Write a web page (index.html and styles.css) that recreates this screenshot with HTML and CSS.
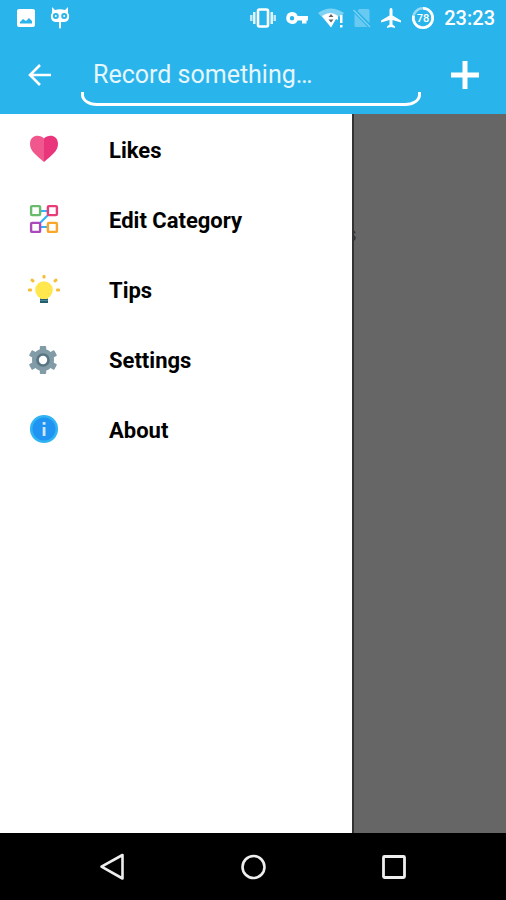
FILE: index.html
```html
<!DOCTYPE html>
<html lang="en">
<head>
  <meta charset="UTF-8" />
  <meta name="viewport" content="width=device-width, initial-scale=1.0"/>
  <title>Record something</title>
  <link rel="stylesheet" href="styles.css">
</head>
<body>
  <div class="status-bar">
    <svg width="18" height="18" viewBox="0 0 18 18">
      <path fill="#fff" fill-rule="evenodd" d="M2 0h14a2 2 0 0 1 2 2v14a2 2 0 0 1-2 2H2a2 2 0 0 1-2-2V2a2 2 0 0 1 2-2zM3 14.500h12V12l-3-3-3 3-3-2-3 3z"/>
    </svg>
    <svg class="cat" width="20" height="22" viewBox="0 0 20 22">
      <path fill="#fff" d="M2 0l3 3q5-1.500 10 0l3-3v6q2 2 1 5-1 4-5 4h-3v5.500a1 1 0 0 1-2 0V15H6q-4 0-5-4Q0 8 2 6z"/>
      <circle cx="5.800" cy="9" r="3" fill="#29b4eb"/>
      <circle cx="14.200" cy="9" r="3" fill="#29b4eb"/>
      <circle cx="5.800" cy="9" r="1" fill="#fff"/>
      <circle cx="14.200" cy="9" r="1" fill="#fff"/>
    </svg>

    <div class="status-right">
      <!-- vibrate -->
      <svg width="26" height="20" viewBox="0 0 26 20">
        <path fill="#fff" d="M0 7h2.500v6H0zM23.500 7H26v6h-2.500z" opacity=".7"/>
        <path fill="#fff" d="M3 4h2.500v12H3zM20.500 4H23v12h-2.500z" opacity=".85"/>
        <rect x="8" y="1.500" width="10" height="17" rx="1.500" fill="none" stroke="#fff" stroke-width="2.600"/>
      </svg>
      <!-- vpn key -->
      <svg width="24" height="14" viewBox="0 0 24 14">
        <path fill="#fff" fill-rule="evenodd" d="M7 1a6 6 0 0 1 5.700 4H23v4.500h-1.500V12.500H17V9.500h-4.300A6 6 0 1 1 7 1zM7 5a2.200 2.200 0 1 0 0 4.400A2.200 2.200 0 0 0 7 5z"/>
      </svg>
      <!-- wifi -->
      <svg width="26" height="20" viewBox="0 0 26 20">
        <path fill="#fff" opacity=".4" d="M0 5Q12.500-4 26 5l-3 3.500h-5L13 19z"/>
        <path fill="#fff" d="M4 8q8.500-6 16 0v4l-2-1-5 8.500z"/>
        <path fill="#6a6262" d="M10.500 9L13 6l2.500 3zM10.500 11.500h5L13 14.500z"/>
        <path fill="#fff" d="M22 7h2.500v8H22zM22 17h2.500v2.500H22z"/>
      </svg>
      <!-- no sim -->
      <svg width="18" height="20" viewBox="0 0 18 20">
        <path fill="#fff" opacity=".3" d="M6 1h9a1.500 1.500 0 0 1 1.500 1.500V15L4.500 3zM1.500 5.500L14.500 19H3a1.500 1.500 0 0 1-1.500-1.500z"/>
        <path stroke="#fff" opacity=".4" stroke-width="1.300" d="M.5 2L17 19"/>
      </svg>
      <!-- airplane -->
      <svg width="22" height="22" viewBox="0 0 22 22">
        <path fill="#fff" d="M11 1q1.500 0 1.500 2v5.500l8.500 5v2L12.500 13v4.500l2.500 2v1.500l-4-1-4 1v-1.500l2.500-2V13L1 15.500v-2l8.500-5V3Q9.500 1 11 1z"/>
      </svg>
      <!-- battery -->
      <svg width="24" height="24" viewBox="0 0 24 24">
        <circle cx="12" cy="12" r="9.700" fill="none" stroke="#fff" stroke-width="2.600" opacity=".5"/>
        <path fill="none" stroke="#fff" stroke-width="2.600" d="M12 2.300a9.700 9.700 0 1 1-9.500 7.500"/>
        <text class="battery-text" x="12" y="16" text-anchor="middle">78</text>
      </svg>
      <span class="clock">23:23</span>
    </div>
  </div>

  <header class="toolbar">
    <button class="icon-btn" aria-label="Back">
      <svg width="24" height="24" viewBox="0 0 24 24">
        <path fill="none" stroke="#fff" stroke-width="2.600" d="M13 2L3 12l10 10M3 12h21"/>
      </svg>
    </button>
    <div class="record-field">
      <input type="text" class="record-input" placeholder="Record something…" aria-label="Record something">
    </div>
    <button class="icon-btn add-btn" aria-label="Add">
      <svg width="28" height="28" viewBox="0 0 28 28">
        <path stroke="#fff" stroke-width="5" d="M14 0v28M0 14h28"/>
      </svg>
    </button>
  </header>

  <main class="content">
    <nav class="drawer">
      <a class="menu-item" href="#likes">
        <svg width="32" height="32" viewBox="0 0 32 32">
          <path fill="#f0588d" d="M16 4.500C12 0 2 .5 2 10c0 7 6 11 14 18z"/>
          <path fill="#e9357b" d="M16 4.500C20 0 30 .5 30 10c0 7-6 11-14 18z"/>
        </svg>
        <span>Likes</span>
      </a>
      <a class="menu-item" href="#category">
        <svg width="32" height="32" viewBox="0 0 32 32">
          <path fill="none" stroke="#36b3f3" stroke-width="2.200" d="M12 7h8M20 11l-9 9M12 23h8"/>
          <g fill="#fff" stroke-width="2.400">
            <rect x="3.100" y="2.100" width="9" height="9" rx="1" stroke="#67bb6b"/>
            <rect x="19.900" y="2.100" width="9" height="9" rx="1" stroke="#e83c79"/>
            <rect x="3.100" y="18.900" width="9" height="9" rx="1" stroke="#aa48bd"/>
            <rect x="19.900" y="18.900" width="9" height="9" rx="1" stroke="#fba629"/>
          </g>
        </svg>
        <span>Edit Category</span>
      </a>
      <a class="menu-item" href="#tips">
        <svg width="32" height="32" viewBox="0 0 32 32">
          <path fill="#255d70" d="M12 24h8v5h-8z"/>
          <path stroke="#4b8795" d="M12 26.500h8"/>
          <circle cx="16" cy="16" r="8.800" fill="#ffe74d"/>
          <path fill="#ffe74d" d="M11 21h10l-1.500 4h-7z"/>
          <g fill="#f7bc36">
            <rect x="14.500" y="1" width="3" height="3.500" rx="1"/>
            <rect x="2.500" y="5" width="4" height="3" rx="1" transform="rotate(40 4.500 6.500)"/>
            <rect x="25.500" y="5" width="4" height="3" rx="1" transform="rotate(-40 27.500 6.500)"/>
            <rect x="0" y="14.500" width="4" height="3" rx="1"/>
            <rect x="28" y="14.500" width="4" height="3" rx="1"/>
          </g>
        </svg>
        <span>Tips</span>
      </a>
      <a class="menu-item" href="#settings">
        <svg width="32" height="32" viewBox="0 0 32 32">
          <g fill="#819ba7">
            <circle cx="15" cy="16" r="11"/>
            <rect x="11.800" y="2" width="6.400" height="28" rx="1"/>
            <rect x="11.800" y="1.500" width="6.400" height="29" rx="1" transform="rotate(60 15 16)"/>
            <rect x="11.800" y="1.500" width="6.400" height="29" rx="1" transform="rotate(-60 15 16)"/>
          </g>
          <circle cx="15" cy="16" r="5.500" fill="#fff" stroke="#587582" stroke-width="2.600"/>
        </svg>
        <span>Settings</span>
      </a>
      <a class="menu-item" href="#about">
        <svg width="32" height="32" viewBox="0 0 32 32">
          <circle cx="16" cy="15" r="12.800" fill="#2094f3" stroke="#31b4f2" stroke-width="2.500"/>
          <path fill="#cfe6fb" d="M14.700 8h2.800v2.800h-2.800zM14.700 13h2.800v9h-2.800z"/>
        </svg>
        <span>About</span>
      </a>
    </nav>
    <div class="backdrop">
      <p class="hidden-text">s</p>
    </div>
  </main>

  <footer class="nav-bar">
    <button class="icon-btn" aria-label="Back">
      <svg width="28" height="28" viewBox="0 0 28 28">
        <path fill="none" stroke="#eee" stroke-width="2.600" stroke-linejoin="round" d="M24.500 2v23.500L3.500 13.700z"/>
      </svg>
    </button>
    <button class="icon-btn" aria-label="Home">
      <svg width="28" height="28" viewBox="0 0 28 28">
        <circle cx="14.500" cy="14" r="11" fill="none" stroke="#eee" stroke-width="2.600"/>
      </svg>
    </button>
    <button class="icon-btn" aria-label="Recent apps">
      <svg width="28" height="28" viewBox="0 0 28 28">
        <rect x="3.500" y="3.500" width="21" height="21" rx="1" fill="none" stroke="#eee" stroke-width="2.800"/>
      </svg>
    </button>
  </footer>
</body>
</html>
```
FILE: styles.css
```css
* {
  box-sizing: border-box;
}

body {
  font-family: Roboto, sans-serif;
  background: #000;
  margin: 0;
  min-height: 100vh;
  display: flex;
  flex-direction: column;
}

svg {
  display: block;
  flex-shrink: 0;
}

.status-bar {
  background: #29b4eb;
  height: 36px;
  padding: 0 11px 0 17px;
  display: flex;
  align-items: center;
}

.cat {
  margin-left: 15px;
}

.status-right {
  margin-left: auto;
  display: flex;
  align-items: center;
  gap: 9px;
}

.battery-text {
  fill: #fff;
  font-size: 11px;
  font-weight: 500;
}

.clock {
  color: #fff;
  font-size: 20px;
  font-weight: 500;
  line-height: 24px;
}

.toolbar {
  background: #29b4eb;
  height: 78px;
  padding: 0 27px;
  display: flex;
  align-items: center;
}

.icon-btn {
  background: none;
  border: none;
  padding: 0;
  cursor: pointer;
}

/* only the bottom part of the rounded outline is drawn */
.record-field {
  flex: 1;
  align-self: flex-end;
  margin: 0 30px 8px;
}

.record-field::after {
  content: "";
  display: block;
  height: 11px;
  border: 3px solid #fff;
  border-top: none;
  border-radius: 0 0 16px 16px / 0 0 11px 11px;
}

.record-input {
  display: block;
  width: 100%;
  height: 40px;
  padding: 4px 12px 0;
  border: none;
  outline: none;
  background: none;
  color: #fff;
  font-family: inherit;
  font-size: 25px;
}

.record-input::placeholder {
  color: #e6f6fd;
  opacity: 1;
}

.content {
  flex: 1;
  display: flex;
  background: #666;
}

.drawer {
  width: 70%;
  padding-top: 1px;
  background: #fff;
  border-right: 2px solid #333;
  z-index: 1;
}

.menu-item {
  display: flex;
  align-items: center;
  gap: 49px;
  height: 70px;
  padding-left: 28px;
  color: #000;
  font-size: 22px;
  font-weight: 700;
  text-decoration: none;
}

.backdrop {
  flex: 1;
}

.hidden-text {
  margin: 108px 0 0 -8px;
  color: #333;
  font-size: 20px;
  line-height: 24px;
}

.nav-bar {
  background: #000;
  height: 67px;
  padding: 0 98px;
  display: flex;
  align-items: center;
  justify-content: space-between;
}
```
